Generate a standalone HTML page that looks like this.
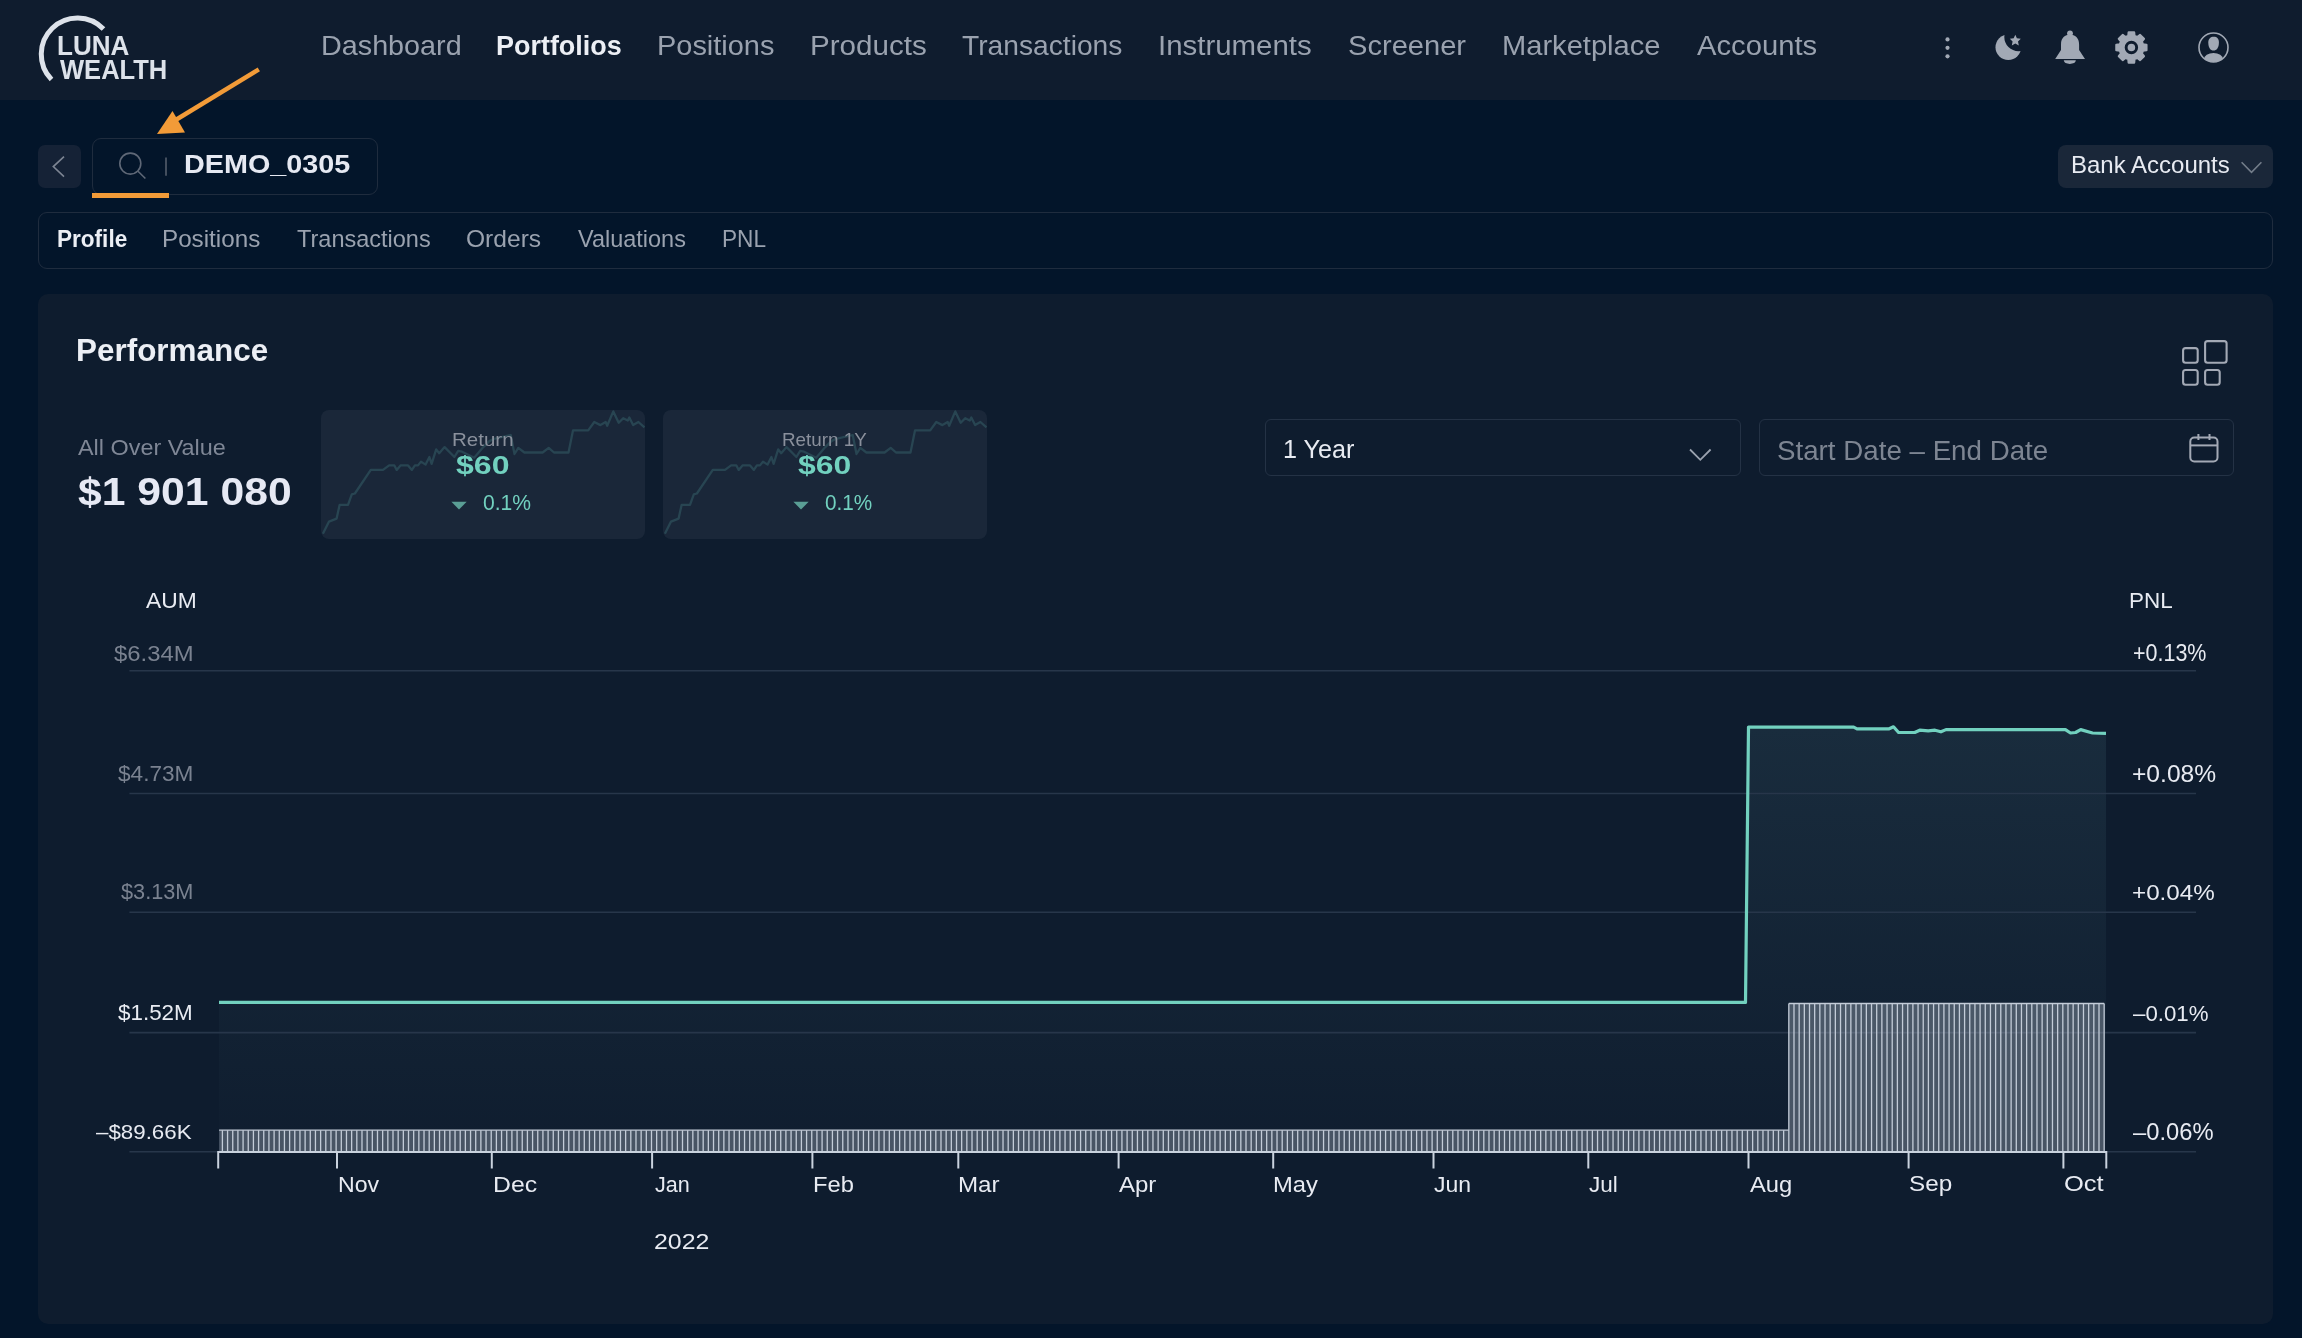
<!DOCTYPE html>
<html><head><meta charset="utf-8">
<style>
*{margin:0;padding:0;box-sizing:border-box}
html,body{width:2302px;height:1338px;overflow:hidden;background:#03152a;font-family:"Liberation Sans",sans-serif}
.a{position:absolute;white-space:nowrap;line-height:1}
.b{position:absolute}
svg{position:absolute;left:0;top:0;overflow:visible}
</style></head><body>
<div class="b" style="left:0;top:0;width:2302px;height:100px;background:#0f1c2e"></div>

<svg width="2302" height="100"><path d="M51.5,79.5 A31,31 0 1 1 103.5,29" fill="none" stroke="#dde2ea" stroke-width="5"/></svg>
<div class="a" style="left:56.6px;top:32.2px;font-size:27.24px;transform:scaleX(0.9575);transform-origin:0 0;font-weight:bold;color:#dde2ea;">LUNA</div>
<div class="a" style="left:60.2px;top:55.8px;font-size:27.39px;transform:scaleX(0.9328);transform-origin:0 0;font-weight:bold;color:#dde2ea;">WEALTH</div>
<div class="a" style="left:320.6px;top:32.1px;font-size:27.24px;transform:scaleX(1.0557);transform-origin:0 0;font-weight:normal;color:#9aa2af;">Dashboard</div>
<div class="a" style="left:656.7px;top:32.1px;font-size:27.24px;transform:scaleX(1.0622);transform-origin:0 0;font-weight:normal;color:#9aa2af;">Positions</div>
<div class="a" style="left:809.8px;top:32.1px;font-size:27.24px;transform:scaleX(1.086);transform-origin:0 0;font-weight:normal;color:#9aa2af;">Products</div>
<div class="a" style="left:962.4px;top:32.1px;font-size:27.24px;transform:scaleX(1.0355);transform-origin:0 0;font-weight:normal;color:#9aa2af;">Transactions</div>
<div class="a" style="left:1158.2px;top:32.1px;font-size:27.24px;transform:scaleX(1.0805);transform-origin:0 0;font-weight:normal;color:#9aa2af;">Instruments</div>
<div class="a" style="left:1347.9px;top:32.1px;font-size:27.24px;transform:scaleX(1.0682);transform-origin:0 0;font-weight:normal;color:#9aa2af;">Screener</div>
<div class="a" style="left:1501.9px;top:32.1px;font-size:27.24px;transform:scaleX(1.0682);transform-origin:0 0;font-weight:normal;color:#9aa2af;">Marketplace</div>
<div class="a" style="left:1697.0px;top:32.1px;font-size:27.24px;transform:scaleX(1.0725);transform-origin:0 0;font-weight:normal;color:#9aa2af;">Accounts</div>
<div class="a" style="left:496.1px;top:32.1px;font-size:27.24px;transform:scaleX(0.9892);transform-origin:0 0;font-weight:bold;color:#eceff5;">Portfolios</div>
<svg width="2302" height="100">
<circle cx="1947.5" cy="39.4" r="2.1" fill="#a2a9b5"/><circle cx="1947.5" cy="47.8" r="2.1" fill="#a2a9b5"/><circle cx="1947.5" cy="56.3" r="2.1" fill="#a2a9b5"/>
<mask id="mm"><rect x="1980" y="20" width="60" height="60" fill="#fff"/><circle cx="2018.5" cy="37" r="14.2" fill="#000"/></mask>
<circle cx="2008.3" cy="47.3" r="12.8" fill="#a2a9b5" mask="url(#mm)"/>
<path d="M2015.3,34.8 L2016.9,38.3 L2020.8,38.8 L2018,41.4 L2018.8,45.6 L2015.3,43.6 L2011.8,45.6 L2012.6,41.4 L2009.8,38.8 L2013.7,38.3Z" fill="#a2a9b5"/>
<circle cx="2070" cy="33.3" r="2.9" fill="#a2a9b5"/>
<path d="M2061,44.5 C2061,38 2065,34.6 2070,34.6 C2075,34.6 2079.1,38 2079.1,44.5 L2079.1,50 L2085,58.9 L2055.2,58.9 L2061,50 Z" fill="#a2a9b5"/>
<path d="M2063.8,60.3 L2075.8,60.3 C2075.8,62.6 2073,63.9 2069.8,63.9 C2066.6,63.9 2063.8,62.6 2063.8,60.3Z" fill="#a2a9b5"/>

<path d="M2128.32,35.90 L2128.66,32.45 L2134.14,32.45 L2134.48,35.90 L2137.42,37.12 L2140.11,34.92 L2143.98,38.79 L2141.78,41.48 L2143.00,44.42 L2146.45,44.76 L2146.45,50.24 L2143.00,50.58 L2141.78,53.52 L2143.98,56.21 L2140.11,60.08 L2137.42,57.88 L2134.48,59.10 L2134.14,62.55 L2128.66,62.55 L2128.32,59.10 L2125.38,57.88 L2122.69,60.08 L2118.82,56.21 L2121.02,53.52 L2119.80,50.58 L2116.35,50.24 L2116.35,44.76 L2119.80,44.42 L2121.02,41.48 L2118.82,38.79 L2122.69,34.92 L2125.38,37.12Z" fill="#a2a9b5" stroke="#a2a9b5" stroke-width="2.2" stroke-linejoin="round"/>
<circle cx="2131.4" cy="47.5" r="5.25" fill="none" stroke="#0f1c2e" stroke-width="2.9"/>
<circle cx="2213.5" cy="47.5" r="14.5" fill="none" stroke="#a2a9b5" stroke-width="1.6"/>
<clipPath id="uc"><circle cx="2213.5" cy="47.5" r="14.6"/></clipPath>
<path d="M2208.3,42.5 C2208.3,38.6 2210.6,36.8 2213.8,36.8 C2217,36.8 2218.9,38.6 2218.9,42.5 C2218.9,47.6 2216.6,50.6 2213.5,50.6 C2210.4,50.6 2208.3,47.6 2208.3,42.5Z" fill="#a2a9b5"/>
<ellipse cx="2213.5" cy="59" rx="9.5" ry="6" fill="#a2a9b5" clip-path="url(#uc)"/>
</svg>
<svg width="2302" height="300">
<line x1="258.8" y1="69.4" x2="174" y2="121" stroke="#f29b38" stroke-width="4.4"/>
<path d="M157,133.9 L172.5,111.1 L185,132.6Z" fill="#f29b38"/>
</svg>
<div class="b" style="left:38px;top:145px;width:43px;height:43px;border-radius:7px;background:#152236"></div>
<svg width="300" height="300"><path d="M64,156.6 L53.3,166.6 L64,176.6" fill="none" stroke="#7d8593" stroke-width="1.6"/></svg>
<div class="b" style="left:92px;top:138px;width:286px;height:57px;border-radius:9px;border:1px solid #1f2c3e"></div>
<svg width="400" height="300"><circle cx="130.3" cy="163.6" r="10.5" fill="none" stroke="#5f6877" stroke-width="1.6"/><line x1="138" y1="171.3" x2="145.4" y2="178.5" stroke="#5f6877" stroke-width="1.6"/><line x1="166" y1="157.5" x2="166" y2="175.7" stroke="#4b5564" stroke-width="1.8"/></svg>
<div class="a" style="left:184.4px;top:152.2px;font-size:25.49px;transform:scaleX(1.1285);transform-origin:0 0;font-weight:bold;color:#e6e9f2;">DEMO_0305</div>
<div class="b" style="left:92px;top:193px;width:77px;height:5px;background:#f29b38"></div>
<div class="b" style="left:2058px;top:145px;width:215px;height:43px;border-radius:8px;background:#1a2739"></div>
<div class="a" style="left:2071.3px;top:153.8px;font-size:23.02px;transform:scaleX(1.0428);transform-origin:0 0;font-weight:normal;color:#e8ebf2;">Bank Accounts</div>
<svg width="2302" height="300"><path d="M2241.6,162.3 L2251.5,172.3 L2261.4,162.3" fill="none" stroke="#737d8a" stroke-width="1.6"/></svg>
<div class="b" style="left:38px;top:212px;width:2235px;height:57px;border-radius:9px;border:1px solid #1f2c3e"></div>
<div class="a" style="left:56.7px;top:227.8px;font-size:23.02px;transform:scaleX(0.9801);transform-origin:0 0;font-weight:bold;color:#eceff5;">Profile</div>
<div class="a" style="left:162.2px;top:227.8px;font-size:23.02px;transform:scaleX(1.052);transform-origin:0 0;font-weight:normal;color:#9aa2af;">Positions</div>
<div class="a" style="left:296.8px;top:227.8px;font-size:23.02px;transform:scaleX(1.021);transform-origin:0 0;font-weight:normal;color:#9aa2af;">Transactions</div>
<div class="a" style="left:466.1px;top:227.8px;font-size:23.02px;transform:scaleX(1.0679);transform-origin:0 0;font-weight:normal;color:#9aa2af;">Orders</div>
<div class="a" style="left:578.4px;top:227.8px;font-size:23.02px;transform:scaleX(1.0199);transform-origin:0 0;font-weight:normal;color:#9aa2af;">Valuations</div>
<div class="a" style="left:721.5px;top:227.8px;font-size:23.02px;transform:scaleX(0.983);transform-origin:0 0;font-weight:normal;color:#9aa2af;">PNL</div>
<div class="b" style="left:38px;top:294px;width:2235px;height:1030px;border-radius:10px;background:#0e1c2e"></div>
<div class="a" style="left:76.3px;top:335.1px;font-size:31.32px;transform:scaleX(1.0036);transform-origin:0 0;font-weight:bold;color:#eceff5;">Performance</div>
<div class="a" style="left:78.0px;top:437.3px;font-size:21.7px;transform:scaleX(1.0787);transform-origin:0 0;font-weight:normal;color:#7f8796;">All Over Value</div>
<div class="a" style="left:77.6px;top:472.7px;font-size:38.33px;transform:scaleX(1.1137);transform-origin:0 0;font-weight:bold;color:#e6e9f4;">$1 901 080</div>
<div class="b" style="left:321.4px;top:410px;width:324px;height:128.5px;border-radius:8px;background:#1a2739;overflow:hidden"></div>
<svg width="2302" height="600"><clipPath id="sc0"><rect x="321.4" y="410" width="324" height="128.5" rx="8"/></clipPath><path d="M322.9,533.8 L329.0,521.6 L336.6,518.6 L339.6,504.9 L348.0,504.9 L351.8,494.3 L354.9,493.5 L370.8,469.9 L383.0,469.9 L389.1,465.4 L394.4,465.4 L396.7,469.9 L400.5,465.4 L408.1,465.4 L411.9,469.9 L414.9,465.4 L418.0,465.4 L421.0,461.6 L425.6,464.6 L429.4,457.0 L431.6,463.9 L436.2,449.4 L439.2,453.2 L444.6,447.1 L454.4,457.0 L458.2,450.9 L462.0,451.7 L474.2,457.8 L483.3,447.1 L489.4,441.1 L494.0,438.8 L510.7,435.0 L514.5,454.0 L518.3,447.9 L524.4,452.5 L542.6,452.5 L548.7,447.9 L554.0,452.5 L568.5,452.5 L573.0,430.4 L588.2,430.4 L594.3,422.0 L600.4,425.1 L605.7,422.0 L607.2,425.8 L613.3,411.4 L618.7,422.8 L623.2,418.2 L627.8,420.5 L629.3,417.5 L633.1,425.1 L638.4,422.0 L644.5,427.4" fill="none" stroke="#284552" stroke-width="2.3" stroke-linejoin="round" clip-path="url(#sc0)"/></svg>
<div class="a" style="left:452.2px;top:430.6px;font-size:18.21px;transform:scaleX(1.1272);transform-origin:0 0;font-weight:normal;color:#8a909c;">Return</div>
<div class="a" style="left:456.4px;top:451.9px;font-size:26.56px;transform:scaleX(1.2066);transform-origin:0 0;font-weight:bold;color:#72d1bf;">$60</div>
<svg width="2302" height="600"><path d="M451.4,501.8 L466.7,501.8 L459,509.5Z" fill="#5a9e95"/></svg>
<div class="a" style="left:482.7px;top:492.1px;font-size:22.54px;transform:scaleX(0.9357);transform-origin:0 0;font-weight:normal;color:#72d1bf;">0.1%</div>
<div class="b" style="left:663.4px;top:410px;width:324px;height:128.5px;border-radius:8px;background:#1a2739;overflow:hidden"></div>
<svg width="2302" height="600"><clipPath id="sc342"><rect x="663.4" y="410" width="324" height="128.5" rx="8"/></clipPath><path d="M664.9,533.8 L671.0,521.6 L678.6,518.6 L681.6,504.9 L690.0,504.9 L693.8,494.3 L696.9,493.5 L712.8,469.9 L725.0,469.9 L731.1,465.4 L736.4,465.4 L738.7,469.9 L742.5,465.4 L750.1,465.4 L753.9,469.9 L756.9,465.4 L760.0,465.4 L763.0,461.6 L767.6,464.6 L771.4,457.0 L773.6,463.9 L778.2,449.4 L781.2,453.2 L786.6,447.1 L796.4,457.0 L800.2,450.9 L804.0,451.7 L816.2,457.8 L825.3,447.1 L831.4,441.1 L836.0,438.8 L852.7,435.0 L856.5,454.0 L860.3,447.9 L866.4,452.5 L884.6,452.5 L890.7,447.9 L896.0,452.5 L910.5,452.5 L915.0,430.4 L930.2,430.4 L936.3,422.0 L942.4,425.1 L947.7,422.0 L949.2,425.8 L955.3,411.4 L960.7,422.8 L965.2,418.2 L969.8,420.5 L971.3,417.5 L975.1,425.1 L980.4,422.0 L986.5,427.4" fill="none" stroke="#284552" stroke-width="2.3" stroke-linejoin="round" clip-path="url(#sc342)"/></svg>
<div class="a" style="left:782.3px;top:430.6px;font-size:18.21px;transform:scaleX(1.0347);transform-origin:0 0;font-weight:normal;color:#8a909c;">Return 1Y</div>
<div class="a" style="left:798.4px;top:451.9px;font-size:26.56px;transform:scaleX(1.202);transform-origin:0 0;font-weight:bold;color:#72d1bf;">$60</div>
<svg width="2302" height="600"><path d="M793.4,501.8 L808.7,501.8 L801,509.5Z" fill="#5a9e95"/></svg>
<div class="a" style="left:824.8px;top:492.1px;font-size:22.54px;transform:scaleX(0.9195);transform-origin:0 0;font-weight:normal;color:#72d1bf;">0.1%</div>
<div class="b" style="left:1265px;top:419px;width:476px;height:57px;border-radius:6px;border:1px solid #243245"></div>
<div class="a" style="left:1282.8px;top:437.3px;font-size:25.93px;transform:scaleX(0.9712);transform-origin:0 0;font-weight:normal;color:#e8ebf2;">1 Year</div>
<svg width="2302" height="600"><path d="M1690,449.5 L1700.3,459.8 L1710.6,449.5" fill="none" stroke="#9aa2af" stroke-width="1.8"/></svg>
<div class="b" style="left:1759px;top:419px;width:475px;height:57px;border-radius:6px;border:1px solid #243245"></div>
<div class="a" style="left:1777.2px;top:436.6px;font-size:27.09px;transform:scaleX(1.0238);transform-origin:0 0;font-weight:normal;color:#7d8592;">Start Date – End Date</div>
<svg width="2302" height="600">
<rect x="2190.3" y="437.5" width="27.2" height="24" rx="4" fill="none" stroke="#a3a9b5" stroke-width="2"/>
<line x1="2190.3" y1="445.4" x2="2217.5" y2="445.4" stroke="#a3a9b5" stroke-width="2"/>
<line x1="2198.4" y1="434" x2="2198.4" y2="440" stroke="#a3a9b5" stroke-width="2"/>
<line x1="2209.5" y1="434" x2="2209.5" y2="440" stroke="#a3a9b5" stroke-width="2"/>
<rect x="2183.1" y="348.1" width="14.6" height="14.7" rx="2.5" fill="none" stroke="#a3a9b5" stroke-width="2.1"/>
<rect x="2205.1" y="341.1" width="21.5" height="21.7" rx="2.5" fill="none" stroke="#a3a9b5" stroke-width="2.1"/>
<rect x="2183.1" y="370" width="14.6" height="14.8" rx="2.5" fill="none" stroke="#a3a9b5" stroke-width="2.1"/>
<rect x="2205.1" y="370" width="14.6" height="14.8" rx="2.5" fill="none" stroke="#a3a9b5" stroke-width="2.1"/>
</svg>
<svg width="2302" height="1338">
<linearGradient id="fg" gradientUnits="userSpaceOnUse" x1="0" y1="727" x2="0" y2="1151"><stop offset="0" stop-color="#192c3d"/><stop offset="1" stop-color="#0f1d2f"/></linearGradient>
<path d="M219,1002.4 L1745.5,1002.4 L1748.5,727.1 L1853.7,727.1 L1857,728.8 L1889.2,728.8 L1893.5,726.8 L1898.6,732.5 L1914.7,732.5 L1919.7,730.2 L1928.2,730.8 L1935,730.2 L1940.9,731.8 L1946,729.6 L2065.4,729.6 L2070.5,733 L2075.6,732.5 L2080.7,729.6 L2092.5,733 L2106,733.4 L2106,1151.8 L219,1151.8Z" fill="url(#fg)"/>
<line x1="129.4" y1="670.8" x2="2196" y2="670.8" stroke="#27364a" stroke-width="1.6"/>
<line x1="129.4" y1="793.5" x2="2196" y2="793.5" stroke="#27364a" stroke-width="1.6"/>
<line x1="129.4" y1="912.2" x2="2196" y2="912.2" stroke="#27364a" stroke-width="1.6"/>
<line x1="129.4" y1="1032.6" x2="2196" y2="1032.6" stroke="#27364a" stroke-width="1.6"/>
<line x1="129.4" y1="1151.8" x2="218" y2="1151.8" stroke="#27364a" stroke-width="1.6"/>
<line x1="2106" y1="1151.8" x2="2196" y2="1151.8" stroke="#27364a" stroke-width="1.6"/>
<path d="M219.10,1130.2H222.40V1151.8H219.10ZM222.40,1130.2H227.57V1151.8H222.40ZM227.57,1130.2H232.74V1151.8H227.57ZM232.74,1130.2H237.91V1151.8H232.74ZM237.91,1130.2H243.08V1151.8H237.91ZM243.08,1130.2H248.25V1151.8H243.08ZM248.25,1130.2H253.42V1151.8H248.25ZM253.42,1130.2H258.59V1151.8H253.42ZM258.59,1130.2H263.76V1151.8H258.59ZM263.76,1130.2H268.93V1151.8H263.76ZM268.93,1130.2H274.10V1151.8H268.93ZM274.10,1130.2H279.27V1151.8H274.10ZM279.27,1130.2H284.44V1151.8H279.27ZM284.44,1130.2H289.61V1151.8H284.44ZM289.61,1130.2H294.78V1151.8H289.61ZM294.78,1130.2H299.95V1151.8H294.78ZM299.95,1130.2H305.12V1151.8H299.95ZM305.12,1130.2H310.28V1151.8H305.12ZM310.28,1130.2H315.45V1151.8H310.28ZM315.45,1130.2H320.62V1151.8H315.45ZM320.62,1130.2H325.79V1151.8H320.62ZM325.79,1130.2H330.96V1151.8H325.79ZM330.96,1130.2H336.13V1151.8H330.96ZM336.13,1130.2H341.30V1151.8H336.13ZM341.30,1130.2H346.47V1151.8H341.30ZM346.47,1130.2H351.64V1151.8H346.47ZM351.64,1130.2H356.81V1151.8H351.64ZM356.81,1130.2H361.98V1151.8H356.81ZM361.98,1130.2H367.15V1151.8H361.98ZM367.15,1130.2H372.32V1151.8H367.15ZM372.32,1130.2H377.49V1151.8H372.32ZM377.49,1130.2H382.66V1151.8H377.49ZM382.66,1130.2H387.83V1151.8H382.66ZM387.83,1130.2H393.00V1151.8H387.83ZM393.00,1130.2H398.17V1151.8H393.00ZM398.17,1130.2H403.34V1151.8H398.17ZM403.34,1130.2H408.51V1151.8H403.34ZM408.51,1130.2H413.68V1151.8H408.51ZM413.68,1130.2H418.85V1151.8H413.68ZM418.85,1130.2H424.02V1151.8H418.85ZM424.02,1130.2H429.19V1151.8H424.02ZM429.19,1130.2H434.36V1151.8H429.19ZM434.36,1130.2H439.53V1151.8H434.36ZM439.53,1130.2H444.70V1151.8H439.53ZM444.70,1130.2H449.87V1151.8H444.70ZM449.87,1130.2H455.04V1151.8H449.87ZM455.04,1130.2H460.21V1151.8H455.04ZM460.21,1130.2H465.38V1151.8H460.21ZM465.38,1130.2H470.55V1151.8H465.38ZM470.55,1130.2H475.72V1151.8H470.55ZM475.72,1130.2H480.88V1151.8H475.72ZM480.88,1130.2H486.05V1151.8H480.88ZM486.05,1130.2H491.22V1151.8H486.05ZM491.22,1130.2H496.39V1151.8H491.22ZM496.39,1130.2H501.56V1151.8H496.39ZM501.56,1130.2H506.73V1151.8H501.56ZM506.73,1130.2H511.90V1151.8H506.73ZM511.90,1130.2H517.07V1151.8H511.90ZM517.07,1130.2H522.24V1151.8H517.07ZM522.24,1130.2H527.41V1151.8H522.24ZM527.41,1130.2H532.58V1151.8H527.41ZM532.58,1130.2H537.75V1151.8H532.58ZM537.75,1130.2H542.92V1151.8H537.75ZM542.92,1130.2H548.09V1151.8H542.92ZM548.09,1130.2H553.26V1151.8H548.09ZM553.26,1130.2H558.43V1151.8H553.26ZM558.43,1130.2H563.60V1151.8H558.43ZM563.60,1130.2H568.77V1151.8H563.60ZM568.77,1130.2H573.94V1151.8H568.77ZM573.94,1130.2H579.11V1151.8H573.94ZM579.11,1130.2H584.28V1151.8H579.11ZM584.28,1130.2H589.45V1151.8H584.28ZM589.45,1130.2H594.62V1151.8H589.45ZM594.62,1130.2H599.79V1151.8H594.62ZM599.79,1130.2H604.96V1151.8H599.79ZM604.96,1130.2H610.13V1151.8H604.96ZM610.13,1130.2H615.30V1151.8H610.13ZM615.30,1130.2H620.47V1151.8H615.30ZM620.47,1130.2H625.64V1151.8H620.47ZM625.64,1130.2H630.81V1151.8H625.64ZM630.81,1130.2H635.98V1151.8H630.81ZM635.98,1130.2H641.15V1151.8H635.98ZM641.15,1130.2H646.32V1151.8H641.15ZM646.32,1130.2H651.49V1151.8H646.32ZM651.49,1130.2H656.65V1151.8H651.49ZM656.65,1130.2H661.82V1151.8H656.65ZM661.82,1130.2H666.99V1151.8H661.82ZM666.99,1130.2H672.16V1151.8H666.99ZM672.16,1130.2H677.33V1151.8H672.16ZM677.33,1130.2H682.50V1151.8H677.33ZM682.50,1130.2H687.67V1151.8H682.50ZM687.67,1130.2H692.84V1151.8H687.67ZM692.84,1130.2H698.01V1151.8H692.84ZM698.01,1130.2H703.18V1151.8H698.01ZM703.18,1130.2H708.35V1151.8H703.18ZM708.35,1130.2H713.52V1151.8H708.35ZM713.52,1130.2H718.69V1151.8H713.52ZM718.69,1130.2H723.86V1151.8H718.69ZM723.86,1130.2H729.03V1151.8H723.86ZM729.03,1130.2H734.20V1151.8H729.03ZM734.20,1130.2H739.37V1151.8H734.20ZM739.37,1130.2H744.54V1151.8H739.37ZM744.54,1130.2H749.71V1151.8H744.54ZM749.71,1130.2H754.88V1151.8H749.71ZM754.88,1130.2H760.05V1151.8H754.88ZM760.05,1130.2H765.22V1151.8H760.05ZM765.22,1130.2H770.39V1151.8H765.22ZM770.39,1130.2H775.56V1151.8H770.39ZM775.56,1130.2H780.73V1151.8H775.56ZM780.73,1130.2H785.90V1151.8H780.73ZM785.90,1130.2H791.07V1151.8H785.90ZM791.07,1130.2H796.24V1151.8H791.07ZM796.24,1130.2H801.41V1151.8H796.24ZM801.41,1130.2H806.58V1151.8H801.41ZM806.58,1130.2H811.75V1151.8H806.58ZM811.75,1130.2H816.92V1151.8H811.75ZM816.92,1130.2H822.09V1151.8H816.92ZM822.09,1130.2H827.25V1151.8H822.09ZM827.25,1130.2H832.42V1151.8H827.25ZM832.42,1130.2H837.59V1151.8H832.42ZM837.59,1130.2H842.76V1151.8H837.59ZM842.76,1130.2H847.93V1151.8H842.76ZM847.93,1130.2H853.10V1151.8H847.93ZM853.10,1130.2H858.27V1151.8H853.10ZM858.27,1130.2H863.44V1151.8H858.27ZM863.44,1130.2H868.61V1151.8H863.44ZM868.61,1130.2H873.78V1151.8H868.61ZM873.78,1130.2H878.95V1151.8H873.78ZM878.95,1130.2H884.12V1151.8H878.95ZM884.12,1130.2H889.29V1151.8H884.12ZM889.29,1130.2H894.46V1151.8H889.29ZM894.46,1130.2H899.63V1151.8H894.46ZM899.63,1130.2H904.80V1151.8H899.63ZM904.80,1130.2H909.97V1151.8H904.80ZM909.97,1130.2H915.14V1151.8H909.97ZM915.14,1130.2H920.31V1151.8H915.14ZM920.31,1130.2H925.48V1151.8H920.31ZM925.48,1130.2H930.65V1151.8H925.48ZM930.65,1130.2H935.82V1151.8H930.65ZM935.82,1130.2H940.99V1151.8H935.82ZM940.99,1130.2H946.16V1151.8H940.99ZM946.16,1130.2H951.33V1151.8H946.16ZM951.33,1130.2H956.50V1151.8H951.33ZM956.50,1130.2H961.67V1151.8H956.50ZM961.67,1130.2H966.84V1151.8H961.67ZM966.84,1130.2H972.01V1151.8H966.84ZM972.01,1130.2H977.18V1151.8H972.01ZM977.18,1130.2H982.35V1151.8H977.18ZM982.35,1130.2H987.52V1151.8H982.35ZM987.52,1130.2H992.69V1151.8H987.52ZM992.69,1130.2H997.85V1151.8H992.69ZM997.85,1130.2H1003.02V1151.8H997.85ZM1003.02,1130.2H1008.19V1151.8H1003.02ZM1008.19,1130.2H1013.36V1151.8H1008.19ZM1013.36,1130.2H1018.53V1151.8H1013.36ZM1018.53,1130.2H1023.70V1151.8H1018.53ZM1023.70,1130.2H1028.87V1151.8H1023.70ZM1028.87,1130.2H1034.04V1151.8H1028.87ZM1034.04,1130.2H1039.21V1151.8H1034.04ZM1039.21,1130.2H1044.38V1151.8H1039.21ZM1044.38,1130.2H1049.55V1151.8H1044.38ZM1049.55,1130.2H1054.72V1151.8H1049.55ZM1054.72,1130.2H1059.89V1151.8H1054.72ZM1059.89,1130.2H1065.06V1151.8H1059.89ZM1065.06,1130.2H1070.23V1151.8H1065.06ZM1070.23,1130.2H1075.40V1151.8H1070.23ZM1075.40,1130.2H1080.57V1151.8H1075.40ZM1080.57,1130.2H1085.74V1151.8H1080.57ZM1085.74,1130.2H1090.91V1151.8H1085.74ZM1090.91,1130.2H1096.08V1151.8H1090.91ZM1096.08,1130.2H1101.25V1151.8H1096.08ZM1101.25,1130.2H1106.42V1151.8H1101.25ZM1106.42,1130.2H1111.59V1151.8H1106.42ZM1111.59,1130.2H1116.76V1151.8H1111.59ZM1116.76,1130.2H1121.93V1151.8H1116.76ZM1121.93,1130.2H1127.10V1151.8H1121.93ZM1127.10,1130.2H1132.27V1151.8H1127.10ZM1132.27,1130.2H1137.44V1151.8H1132.27ZM1137.44,1130.2H1142.61V1151.8H1137.44ZM1142.61,1130.2H1147.78V1151.8H1142.61ZM1147.78,1130.2H1152.95V1151.8H1147.78ZM1152.95,1130.2H1158.12V1151.8H1152.95ZM1158.12,1130.2H1163.29V1151.8H1158.12ZM1163.29,1130.2H1168.46V1151.8H1163.29ZM1168.46,1130.2H1173.62V1151.8H1168.46ZM1173.62,1130.2H1178.79V1151.8H1173.62ZM1178.79,1130.2H1183.96V1151.8H1178.79ZM1183.96,1130.2H1189.13V1151.8H1183.96ZM1189.13,1130.2H1194.30V1151.8H1189.13ZM1194.30,1130.2H1199.47V1151.8H1194.30ZM1199.47,1130.2H1204.64V1151.8H1199.47ZM1204.64,1130.2H1209.81V1151.8H1204.64ZM1209.81,1130.2H1214.98V1151.8H1209.81ZM1214.98,1130.2H1220.15V1151.8H1214.98ZM1220.15,1130.2H1225.32V1151.8H1220.15ZM1225.32,1130.2H1230.49V1151.8H1225.32ZM1230.49,1130.2H1235.66V1151.8H1230.49ZM1235.66,1130.2H1240.83V1151.8H1235.66ZM1240.83,1130.2H1246.00V1151.8H1240.83ZM1246.00,1130.2H1251.17V1151.8H1246.00ZM1251.17,1130.2H1256.34V1151.8H1251.17ZM1256.34,1130.2H1261.51V1151.8H1256.34ZM1261.51,1130.2H1266.68V1151.8H1261.51ZM1266.68,1130.2H1271.85V1151.8H1266.68ZM1271.85,1130.2H1277.02V1151.8H1271.85ZM1277.02,1130.2H1282.19V1151.8H1277.02ZM1282.19,1130.2H1287.36V1151.8H1282.19ZM1287.36,1130.2H1292.53V1151.8H1287.36ZM1292.53,1130.2H1297.70V1151.8H1292.53ZM1297.70,1130.2H1302.87V1151.8H1297.70ZM1302.87,1130.2H1308.04V1151.8H1302.87ZM1308.04,1130.2H1313.21V1151.8H1308.04ZM1313.21,1130.2H1318.38V1151.8H1313.21ZM1318.38,1130.2H1323.55V1151.8H1318.38ZM1323.55,1130.2H1328.72V1151.8H1323.55ZM1328.72,1130.2H1333.89V1151.8H1328.72ZM1333.89,1130.2H1339.06V1151.8H1333.89ZM1339.06,1130.2H1344.22V1151.8H1339.06ZM1344.22,1130.2H1349.39V1151.8H1344.22ZM1349.39,1130.2H1354.56V1151.8H1349.39ZM1354.56,1130.2H1359.73V1151.8H1354.56ZM1359.73,1130.2H1364.90V1151.8H1359.73ZM1364.90,1130.2H1370.07V1151.8H1364.90ZM1370.07,1130.2H1375.24V1151.8H1370.07ZM1375.24,1130.2H1380.41V1151.8H1375.24ZM1380.41,1130.2H1385.58V1151.8H1380.41ZM1385.58,1130.2H1390.75V1151.8H1385.58ZM1390.75,1130.2H1395.92V1151.8H1390.75ZM1395.92,1130.2H1401.09V1151.8H1395.92ZM1401.09,1130.2H1406.26V1151.8H1401.09ZM1406.26,1130.2H1411.43V1151.8H1406.26ZM1411.43,1130.2H1416.60V1151.8H1411.43ZM1416.60,1130.2H1421.77V1151.8H1416.60ZM1421.77,1130.2H1426.94V1151.8H1421.77ZM1426.94,1130.2H1432.11V1151.8H1426.94ZM1432.11,1130.2H1437.28V1151.8H1432.11ZM1437.28,1130.2H1442.45V1151.8H1437.28ZM1442.45,1130.2H1447.62V1151.8H1442.45ZM1447.62,1130.2H1452.79V1151.8H1447.62ZM1452.79,1130.2H1457.96V1151.8H1452.79ZM1457.96,1130.2H1463.13V1151.8H1457.96ZM1463.13,1130.2H1468.30V1151.8H1463.13ZM1468.30,1130.2H1473.47V1151.8H1468.30ZM1473.47,1130.2H1478.64V1151.8H1473.47ZM1478.64,1130.2H1483.81V1151.8H1478.64ZM1483.81,1130.2H1488.98V1151.8H1483.81ZM1488.98,1130.2H1494.15V1151.8H1488.98ZM1494.15,1130.2H1499.32V1151.8H1494.15ZM1499.32,1130.2H1504.49V1151.8H1499.32ZM1504.49,1130.2H1509.66V1151.8H1504.49ZM1509.66,1130.2H1514.83V1151.8H1509.66ZM1514.83,1130.2H1519.99V1151.8H1514.83ZM1519.99,1130.2H1525.16V1151.8H1519.99ZM1525.16,1130.2H1530.33V1151.8H1525.16ZM1530.33,1130.2H1535.50V1151.8H1530.33ZM1535.50,1130.2H1540.67V1151.8H1535.50ZM1540.67,1130.2H1545.84V1151.8H1540.67ZM1545.84,1130.2H1551.01V1151.8H1545.84ZM1551.01,1130.2H1556.18V1151.8H1551.01ZM1556.18,1130.2H1561.35V1151.8H1556.18ZM1561.35,1130.2H1566.52V1151.8H1561.35ZM1566.52,1130.2H1571.69V1151.8H1566.52ZM1571.69,1130.2H1576.86V1151.8H1571.69ZM1576.86,1130.2H1582.03V1151.8H1576.86ZM1582.03,1130.2H1587.20V1151.8H1582.03ZM1587.20,1130.2H1592.37V1151.8H1587.20ZM1592.37,1130.2H1597.54V1151.8H1592.37ZM1597.54,1130.2H1602.71V1151.8H1597.54ZM1602.71,1130.2H1607.88V1151.8H1602.71ZM1607.88,1130.2H1613.05V1151.8H1607.88ZM1613.05,1130.2H1618.22V1151.8H1613.05ZM1618.22,1130.2H1623.39V1151.8H1618.22ZM1623.39,1130.2H1628.56V1151.8H1623.39ZM1628.56,1130.2H1633.73V1151.8H1628.56ZM1633.73,1130.2H1638.90V1151.8H1633.73ZM1638.90,1130.2H1644.07V1151.8H1638.90ZM1644.07,1130.2H1649.24V1151.8H1644.07ZM1649.24,1130.2H1654.41V1151.8H1649.24ZM1654.41,1130.2H1659.58V1151.8H1654.41ZM1659.58,1130.2H1664.75V1151.8H1659.58ZM1664.75,1130.2H1669.92V1151.8H1664.75ZM1669.92,1130.2H1675.09V1151.8H1669.92ZM1675.09,1130.2H1680.26V1151.8H1675.09ZM1680.26,1130.2H1685.43V1151.8H1680.26ZM1685.43,1130.2H1690.59V1151.8H1685.43ZM1690.59,1130.2H1695.76V1151.8H1690.59ZM1695.76,1130.2H1700.93V1151.8H1695.76ZM1700.93,1130.2H1706.10V1151.8H1700.93ZM1706.10,1130.2H1711.27V1151.8H1706.10ZM1711.27,1130.2H1716.44V1151.8H1711.27ZM1716.44,1130.2H1721.61V1151.8H1716.44ZM1721.61,1130.2H1726.78V1151.8H1721.61ZM1726.78,1130.2H1731.95V1151.8H1726.78ZM1731.95,1130.2H1737.12V1151.8H1731.95ZM1737.12,1130.2H1742.29V1151.8H1737.12ZM1742.29,1130.2H1747.46V1151.8H1742.29ZM1747.46,1130.2H1752.63V1151.8H1747.46ZM1752.63,1130.2H1757.80V1151.8H1752.63ZM1757.80,1130.2H1762.97V1151.8H1757.80ZM1762.97,1130.2H1768.14V1151.8H1762.97ZM1768.14,1130.2H1773.31V1151.8H1768.14ZM1773.31,1130.2H1778.48V1151.8H1773.31ZM1778.48,1130.2H1783.65V1151.8H1778.48ZM1783.65,1130.2H1788.82V1151.8H1783.65ZM1788.82,1003.5H1793.99V1151.8H1788.82ZM1793.99,1003.5H1799.16V1151.8H1793.99ZM1799.16,1003.5H1804.33V1151.8H1799.16ZM1804.33,1003.5H1809.50V1151.8H1804.33ZM1809.50,1003.5H1814.67V1151.8H1809.50ZM1814.67,1003.5H1819.84V1151.8H1814.67ZM1819.84,1003.5H1825.01V1151.8H1819.84ZM1825.01,1003.5H1830.18V1151.8H1825.01ZM1830.18,1003.5H1835.35V1151.8H1830.18ZM1835.35,1003.5H1840.52V1151.8H1835.35ZM1840.52,1003.5H1845.69V1151.8H1840.52ZM1845.69,1003.5H1850.86V1151.8H1845.69ZM1850.86,1003.5H1856.03V1151.8H1850.86ZM1856.03,1003.5H1861.19V1151.8H1856.03ZM1861.19,1003.5H1866.36V1151.8H1861.19ZM1866.36,1003.5H1871.53V1151.8H1866.36ZM1871.53,1003.5H1876.70V1151.8H1871.53ZM1876.70,1003.5H1881.87V1151.8H1876.70ZM1881.87,1003.5H1887.04V1151.8H1881.87ZM1887.04,1003.5H1892.21V1151.8H1887.04ZM1892.21,1003.5H1897.38V1151.8H1892.21ZM1897.38,1003.5H1902.55V1151.8H1897.38ZM1902.55,1003.5H1907.72V1151.8H1902.55ZM1907.72,1003.5H1912.89V1151.8H1907.72ZM1912.89,1003.5H1918.06V1151.8H1912.89ZM1918.06,1003.5H1923.23V1151.8H1918.06ZM1923.23,1003.5H1928.40V1151.8H1923.23ZM1928.40,1003.5H1933.57V1151.8H1928.40ZM1933.57,1003.5H1938.74V1151.8H1933.57ZM1938.74,1003.5H1943.91V1151.8H1938.74ZM1943.91,1003.5H1949.08V1151.8H1943.91ZM1949.08,1003.5H1954.25V1151.8H1949.08ZM1954.25,1003.5H1959.42V1151.8H1954.25ZM1959.42,1003.5H1964.59V1151.8H1959.42ZM1964.59,1003.5H1969.76V1151.8H1964.59ZM1969.76,1003.5H1974.93V1151.8H1969.76ZM1974.93,1003.5H1980.10V1151.8H1974.93ZM1980.10,1003.5H1985.27V1151.8H1980.10ZM1985.27,1003.5H1990.44V1151.8H1985.27ZM1990.44,1003.5H1995.61V1151.8H1990.44ZM1995.61,1003.5H2000.78V1151.8H1995.61ZM2000.78,1003.5H2005.95V1151.8H2000.78ZM2005.95,1003.5H2011.12V1151.8H2005.95ZM2011.12,1003.5H2016.29V1151.8H2011.12ZM2016.29,1003.5H2021.46V1151.8H2016.29ZM2021.46,1003.5H2026.63V1151.8H2021.46ZM2026.63,1003.5H2031.80V1151.8H2026.63ZM2031.80,1003.5H2036.96V1151.8H2031.80ZM2036.96,1003.5H2042.13V1151.8H2036.96ZM2042.13,1003.5H2047.30V1151.8H2042.13ZM2047.30,1003.5H2052.47V1151.8H2047.30ZM2052.47,1003.5H2057.64V1151.8H2052.47ZM2057.64,1003.5H2062.81V1151.8H2057.64ZM2062.81,1003.5H2067.98V1151.8H2062.81ZM2067.98,1003.5H2073.15V1151.8H2067.98ZM2073.15,1003.5H2078.32V1151.8H2073.15ZM2078.32,1003.5H2083.49V1151.8H2078.32ZM2083.49,1003.5H2088.66V1151.8H2083.49ZM2088.66,1003.5H2093.83V1151.8H2088.66ZM2093.83,1003.5H2099.00V1151.8H2093.83ZM2099.00,1003.5H2104.17V1151.8H2099.00Z" fill="#c0c9d6" fill-opacity="0.32"/>
<path d="M222.40,1130.2V1151.8M227.57,1130.2V1151.8M232.74,1130.2V1151.8M237.91,1130.2V1151.8M243.08,1130.2V1151.8M248.25,1130.2V1151.8M253.42,1130.2V1151.8M258.59,1130.2V1151.8M263.76,1130.2V1151.8M268.93,1130.2V1151.8M274.10,1130.2V1151.8M279.27,1130.2V1151.8M284.44,1130.2V1151.8M289.61,1130.2V1151.8M294.78,1130.2V1151.8M299.95,1130.2V1151.8M305.12,1130.2V1151.8M310.28,1130.2V1151.8M315.45,1130.2V1151.8M320.62,1130.2V1151.8M325.79,1130.2V1151.8M330.96,1130.2V1151.8M336.13,1130.2V1151.8M341.30,1130.2V1151.8M346.47,1130.2V1151.8M351.64,1130.2V1151.8M356.81,1130.2V1151.8M361.98,1130.2V1151.8M367.15,1130.2V1151.8M372.32,1130.2V1151.8M377.49,1130.2V1151.8M382.66,1130.2V1151.8M387.83,1130.2V1151.8M393.00,1130.2V1151.8M398.17,1130.2V1151.8M403.34,1130.2V1151.8M408.51,1130.2V1151.8M413.68,1130.2V1151.8M418.85,1130.2V1151.8M424.02,1130.2V1151.8M429.19,1130.2V1151.8M434.36,1130.2V1151.8M439.53,1130.2V1151.8M444.70,1130.2V1151.8M449.87,1130.2V1151.8M455.04,1130.2V1151.8M460.21,1130.2V1151.8M465.38,1130.2V1151.8M470.55,1130.2V1151.8M475.72,1130.2V1151.8M480.88,1130.2V1151.8M486.05,1130.2V1151.8M491.22,1130.2V1151.8M496.39,1130.2V1151.8M501.56,1130.2V1151.8M506.73,1130.2V1151.8M511.90,1130.2V1151.8M517.07,1130.2V1151.8M522.24,1130.2V1151.8M527.41,1130.2V1151.8M532.58,1130.2V1151.8M537.75,1130.2V1151.8M542.92,1130.2V1151.8M548.09,1130.2V1151.8M553.26,1130.2V1151.8M558.43,1130.2V1151.8M563.60,1130.2V1151.8M568.77,1130.2V1151.8M573.94,1130.2V1151.8M579.11,1130.2V1151.8M584.28,1130.2V1151.8M589.45,1130.2V1151.8M594.62,1130.2V1151.8M599.79,1130.2V1151.8M604.96,1130.2V1151.8M610.13,1130.2V1151.8M615.30,1130.2V1151.8M620.47,1130.2V1151.8M625.64,1130.2V1151.8M630.81,1130.2V1151.8M635.98,1130.2V1151.8M641.15,1130.2V1151.8M646.32,1130.2V1151.8M651.49,1130.2V1151.8M656.65,1130.2V1151.8M661.82,1130.2V1151.8M666.99,1130.2V1151.8M672.16,1130.2V1151.8M677.33,1130.2V1151.8M682.50,1130.2V1151.8M687.67,1130.2V1151.8M692.84,1130.2V1151.8M698.01,1130.2V1151.8M703.18,1130.2V1151.8M708.35,1130.2V1151.8M713.52,1130.2V1151.8M718.69,1130.2V1151.8M723.86,1130.2V1151.8M729.03,1130.2V1151.8M734.20,1130.2V1151.8M739.37,1130.2V1151.8M744.54,1130.2V1151.8M749.71,1130.2V1151.8M754.88,1130.2V1151.8M760.05,1130.2V1151.8M765.22,1130.2V1151.8M770.39,1130.2V1151.8M775.56,1130.2V1151.8M780.73,1130.2V1151.8M785.90,1130.2V1151.8M791.07,1130.2V1151.8M796.24,1130.2V1151.8M801.41,1130.2V1151.8M806.58,1130.2V1151.8M811.75,1130.2V1151.8M816.92,1130.2V1151.8M822.09,1130.2V1151.8M827.25,1130.2V1151.8M832.42,1130.2V1151.8M837.59,1130.2V1151.8M842.76,1130.2V1151.8M847.93,1130.2V1151.8M853.10,1130.2V1151.8M858.27,1130.2V1151.8M863.44,1130.2V1151.8M868.61,1130.2V1151.8M873.78,1130.2V1151.8M878.95,1130.2V1151.8M884.12,1130.2V1151.8M889.29,1130.2V1151.8M894.46,1130.2V1151.8M899.63,1130.2V1151.8M904.80,1130.2V1151.8M909.97,1130.2V1151.8M915.14,1130.2V1151.8M920.31,1130.2V1151.8M925.48,1130.2V1151.8M930.65,1130.2V1151.8M935.82,1130.2V1151.8M940.99,1130.2V1151.8M946.16,1130.2V1151.8M951.33,1130.2V1151.8M956.50,1130.2V1151.8M961.67,1130.2V1151.8M966.84,1130.2V1151.8M972.01,1130.2V1151.8M977.18,1130.2V1151.8M982.35,1130.2V1151.8M987.52,1130.2V1151.8M992.69,1130.2V1151.8M997.85,1130.2V1151.8M1003.02,1130.2V1151.8M1008.19,1130.2V1151.8M1013.36,1130.2V1151.8M1018.53,1130.2V1151.8M1023.70,1130.2V1151.8M1028.87,1130.2V1151.8M1034.04,1130.2V1151.8M1039.21,1130.2V1151.8M1044.38,1130.2V1151.8M1049.55,1130.2V1151.8M1054.72,1130.2V1151.8M1059.89,1130.2V1151.8M1065.06,1130.2V1151.8M1070.23,1130.2V1151.8M1075.40,1130.2V1151.8M1080.57,1130.2V1151.8M1085.74,1130.2V1151.8M1090.91,1130.2V1151.8M1096.08,1130.2V1151.8M1101.25,1130.2V1151.8M1106.42,1130.2V1151.8M1111.59,1130.2V1151.8M1116.76,1130.2V1151.8M1121.93,1130.2V1151.8M1127.10,1130.2V1151.8M1132.27,1130.2V1151.8M1137.44,1130.2V1151.8M1142.61,1130.2V1151.8M1147.78,1130.2V1151.8M1152.95,1130.2V1151.8M1158.12,1130.2V1151.8M1163.29,1130.2V1151.8M1168.46,1130.2V1151.8M1173.62,1130.2V1151.8M1178.79,1130.2V1151.8M1183.96,1130.2V1151.8M1189.13,1130.2V1151.8M1194.30,1130.2V1151.8M1199.47,1130.2V1151.8M1204.64,1130.2V1151.8M1209.81,1130.2V1151.8M1214.98,1130.2V1151.8M1220.15,1130.2V1151.8M1225.32,1130.2V1151.8M1230.49,1130.2V1151.8M1235.66,1130.2V1151.8M1240.83,1130.2V1151.8M1246.00,1130.2V1151.8M1251.17,1130.2V1151.8M1256.34,1130.2V1151.8M1261.51,1130.2V1151.8M1266.68,1130.2V1151.8M1271.85,1130.2V1151.8M1277.02,1130.2V1151.8M1282.19,1130.2V1151.8M1287.36,1130.2V1151.8M1292.53,1130.2V1151.8M1297.70,1130.2V1151.8M1302.87,1130.2V1151.8M1308.04,1130.2V1151.8M1313.21,1130.2V1151.8M1318.38,1130.2V1151.8M1323.55,1130.2V1151.8M1328.72,1130.2V1151.8M1333.89,1130.2V1151.8M1339.06,1130.2V1151.8M1344.22,1130.2V1151.8M1349.39,1130.2V1151.8M1354.56,1130.2V1151.8M1359.73,1130.2V1151.8M1364.90,1130.2V1151.8M1370.07,1130.2V1151.8M1375.24,1130.2V1151.8M1380.41,1130.2V1151.8M1385.58,1130.2V1151.8M1390.75,1130.2V1151.8M1395.92,1130.2V1151.8M1401.09,1130.2V1151.8M1406.26,1130.2V1151.8M1411.43,1130.2V1151.8M1416.60,1130.2V1151.8M1421.77,1130.2V1151.8M1426.94,1130.2V1151.8M1432.11,1130.2V1151.8M1437.28,1130.2V1151.8M1442.45,1130.2V1151.8M1447.62,1130.2V1151.8M1452.79,1130.2V1151.8M1457.96,1130.2V1151.8M1463.13,1130.2V1151.8M1468.30,1130.2V1151.8M1473.47,1130.2V1151.8M1478.64,1130.2V1151.8M1483.81,1130.2V1151.8M1488.98,1130.2V1151.8M1494.15,1130.2V1151.8M1499.32,1130.2V1151.8M1504.49,1130.2V1151.8M1509.66,1130.2V1151.8M1514.83,1130.2V1151.8M1519.99,1130.2V1151.8M1525.16,1130.2V1151.8M1530.33,1130.2V1151.8M1535.50,1130.2V1151.8M1540.67,1130.2V1151.8M1545.84,1130.2V1151.8M1551.01,1130.2V1151.8M1556.18,1130.2V1151.8M1561.35,1130.2V1151.8M1566.52,1130.2V1151.8M1571.69,1130.2V1151.8M1576.86,1130.2V1151.8M1582.03,1130.2V1151.8M1587.20,1130.2V1151.8M1592.37,1130.2V1151.8M1597.54,1130.2V1151.8M1602.71,1130.2V1151.8M1607.88,1130.2V1151.8M1613.05,1130.2V1151.8M1618.22,1130.2V1151.8M1623.39,1130.2V1151.8M1628.56,1130.2V1151.8M1633.73,1130.2V1151.8M1638.90,1130.2V1151.8M1644.07,1130.2V1151.8M1649.24,1130.2V1151.8M1654.41,1130.2V1151.8M1659.58,1130.2V1151.8M1664.75,1130.2V1151.8M1669.92,1130.2V1151.8M1675.09,1130.2V1151.8M1680.26,1130.2V1151.8M1685.43,1130.2V1151.8M1690.59,1130.2V1151.8M1695.76,1130.2V1151.8M1700.93,1130.2V1151.8M1706.10,1130.2V1151.8M1711.27,1130.2V1151.8M1716.44,1130.2V1151.8M1721.61,1130.2V1151.8M1726.78,1130.2V1151.8M1731.95,1130.2V1151.8M1737.12,1130.2V1151.8M1742.29,1130.2V1151.8M1747.46,1130.2V1151.8M1752.63,1130.2V1151.8M1757.80,1130.2V1151.8M1762.97,1130.2V1151.8M1768.14,1130.2V1151.8M1773.31,1130.2V1151.8M1778.48,1130.2V1151.8M1783.65,1130.2V1151.8M1788.82,1003.5V1151.8M1793.99,1003.5V1151.8M1799.16,1003.5V1151.8M1804.33,1003.5V1151.8M1809.50,1003.5V1151.8M1814.67,1003.5V1151.8M1819.84,1003.5V1151.8M1825.01,1003.5V1151.8M1830.18,1003.5V1151.8M1835.35,1003.5V1151.8M1840.52,1003.5V1151.8M1845.69,1003.5V1151.8M1850.86,1003.5V1151.8M1856.03,1003.5V1151.8M1861.19,1003.5V1151.8M1866.36,1003.5V1151.8M1871.53,1003.5V1151.8M1876.70,1003.5V1151.8M1881.87,1003.5V1151.8M1887.04,1003.5V1151.8M1892.21,1003.5V1151.8M1897.38,1003.5V1151.8M1902.55,1003.5V1151.8M1907.72,1003.5V1151.8M1912.89,1003.5V1151.8M1918.06,1003.5V1151.8M1923.23,1003.5V1151.8M1928.40,1003.5V1151.8M1933.57,1003.5V1151.8M1938.74,1003.5V1151.8M1943.91,1003.5V1151.8M1949.08,1003.5V1151.8M1954.25,1003.5V1151.8M1959.42,1003.5V1151.8M1964.59,1003.5V1151.8M1969.76,1003.5V1151.8M1974.93,1003.5V1151.8M1980.10,1003.5V1151.8M1985.27,1003.5V1151.8M1990.44,1003.5V1151.8M1995.61,1003.5V1151.8M2000.78,1003.5V1151.8M2005.95,1003.5V1151.8M2011.12,1003.5V1151.8M2016.29,1003.5V1151.8M2021.46,1003.5V1151.8M2026.63,1003.5V1151.8M2031.80,1003.5V1151.8M2036.96,1003.5V1151.8M2042.13,1003.5V1151.8M2047.30,1003.5V1151.8M2052.47,1003.5V1151.8M2057.64,1003.5V1151.8M2062.81,1003.5V1151.8M2067.98,1003.5V1151.8M2073.15,1003.5V1151.8M2078.32,1003.5V1151.8M2083.49,1003.5V1151.8M2088.66,1003.5V1151.8M2093.83,1003.5V1151.8M2099.00,1003.5V1151.8M2104.17,1003.5V1151.8" fill="none" stroke="#c3ccd8" stroke-width="1.3"/>
<path d="M219.1,1130.2H1788.82M1788.82,1003.5H2104.17" fill="none" stroke="#c3ccd8" stroke-width="1.3"/>
<line x1="218" y1="1152" x2="2107" y2="1152" stroke="#c9d2de" stroke-width="2"/>
<line x1="218.2" y1="1151" x2="218.2" y2="1168.5" stroke="#c9d2de" stroke-width="2"/>
<line x1="337" y1="1151" x2="337" y2="1168.5" stroke="#c9d2de" stroke-width="2"/>
<line x1="491.8" y1="1151" x2="491.8" y2="1168.5" stroke="#c9d2de" stroke-width="2"/>
<line x1="652.1" y1="1151" x2="652.1" y2="1168.5" stroke="#c9d2de" stroke-width="2"/>
<line x1="812.4" y1="1151" x2="812.4" y2="1168.5" stroke="#c9d2de" stroke-width="2"/>
<line x1="958.3" y1="1151" x2="958.3" y2="1168.5" stroke="#c9d2de" stroke-width="2"/>
<line x1="1118.6" y1="1151" x2="1118.6" y2="1168.5" stroke="#c9d2de" stroke-width="2"/>
<line x1="1273.2" y1="1151" x2="1273.2" y2="1168.5" stroke="#c9d2de" stroke-width="2"/>
<line x1="1433.5" y1="1151" x2="1433.5" y2="1168.5" stroke="#c9d2de" stroke-width="2"/>
<line x1="1588.3" y1="1151" x2="1588.3" y2="1168.5" stroke="#c9d2de" stroke-width="2"/>
<line x1="1748.5" y1="1151" x2="1748.5" y2="1168.5" stroke="#c9d2de" stroke-width="2"/>
<line x1="1908.6" y1="1151" x2="1908.6" y2="1168.5" stroke="#c9d2de" stroke-width="2"/>
<line x1="2063.4" y1="1151" x2="2063.4" y2="1168.5" stroke="#c9d2de" stroke-width="2"/>
<line x1="2106.3" y1="1151" x2="2106.3" y2="1168.5" stroke="#c9d2de" stroke-width="2"/>
<path d="M219,1002.4 L1745.5,1002.4 L1748.5,727.1 L1853.7,727.1 L1857,728.8 L1889.2,728.8 L1893.5,726.8 L1898.6,732.5 L1914.7,732.5 L1919.7,730.2 L1928.2,730.8 L1935,730.2 L1940.9,731.8 L1946,729.6 L2065.4,729.6 L2070.5,733 L2075.6,732.5 L2080.7,729.6 L2092.5,733 L2106,733.4" fill="none" stroke="#72d1bf" stroke-width="3.2" stroke-linejoin="round"/>
</svg>
<div class="a" style="left:145.5px;top:590.4px;font-size:22.29px;transform:scaleX(1.0232);transform-origin:0 0;font-weight:normal;color:#e8ebf2;">AUM</div>
<div class="a" style="left:2129.2px;top:590.3px;font-size:21.85px;transform:scaleX(1.0279);transform-origin:0 0;font-weight:normal;color:#e8ebf2;">PNL</div>
<div class="a" style="left:114.0px;top:642.2px;font-size:22.72px;transform:scaleX(1.0499);transform-origin:0 0;font-weight:normal;color:#7a8290;">$6.34M</div>
<div class="a" style="left:118.0px;top:763.1px;font-size:22.29px;transform:scaleX(1.0151);transform-origin:0 0;font-weight:normal;color:#7a8290;">$4.73M</div>
<div class="a" style="left:121.0px;top:881.2px;font-size:22.14px;transform:scaleX(0.9814);transform-origin:0 0;font-weight:normal;color:#7a8290;">$3.13M</div>
<div class="a" style="left:117.7px;top:1002.0px;font-size:22.0px;transform:scaleX(1.0187);transform-origin:0 0;font-weight:normal;color:#e8ebf2;">$1.52M</div>
<div class="a" style="left:96.3px;top:1122.4px;font-size:20.54px;transform:scaleX(1.0866);transform-origin:0 0;font-weight:normal;color:#e8ebf2;">–$89.66K</div>
<div class="a" style="left:2132.9px;top:641.5px;font-size:23.12px;transform:scaleX(0.9289);transform-origin:0 0;font-weight:normal;color:#e8ebf2;">+0.13%</div>
<div class="a" style="left:2131.8px;top:762.5px;font-size:23.4px;transform:scaleX(1.0522);transform-origin:0 0;font-weight:normal;color:#e8ebf2;">+0.08%</div>
<div class="a" style="left:2131.8px;top:880.6px;font-size:22.68px;transform:scaleX(1.0683);transform-origin:0 0;font-weight:normal;color:#e8ebf2;">+0.04%</div>
<div class="a" style="left:2133.0px;top:1001.6px;font-size:22.97px;transform:scaleX(0.9691);transform-origin:0 0;font-weight:normal;color:#e8ebf2;">–0.01%</div>
<div class="a" style="left:2133.0px;top:1121.0px;font-size:23.26px;transform:scaleX(1.0211);transform-origin:0 0;font-weight:normal;color:#e8ebf2;">–0.06%</div>
<div class="a" style="left:338.0px;top:1173.5px;font-size:21.56px;transform:scaleX(1.0732);transform-origin:0 0;font-weight:normal;color:#e8ebf2;">Nov</div>
<div class="a" style="left:492.7px;top:1173.5px;font-size:21.56px;transform:scaleX(1.1499);transform-origin:0 0;font-weight:normal;color:#e8ebf2;">Dec</div>
<div class="a" style="left:654.6px;top:1173.5px;font-size:21.56px;transform:scaleX(1.0005);transform-origin:0 0;font-weight:normal;color:#e8ebf2;">Jan</div>
<div class="a" style="left:813.1px;top:1173.5px;font-size:21.56px;transform:scaleX(1.1016);transform-origin:0 0;font-weight:normal;color:#e8ebf2;">Feb</div>
<div class="a" style="left:957.7px;top:1173.5px;font-size:21.56px;transform:scaleX(1.1212);transform-origin:0 0;font-weight:normal;color:#e8ebf2;">Mar</div>
<div class="a" style="left:1119.4px;top:1173.5px;font-size:21.56px;transform:scaleX(1.1144);transform-origin:0 0;font-weight:normal;color:#e8ebf2;">Apr</div>
<div class="a" style="left:1272.6px;top:1173.5px;font-size:21.56px;transform:scaleX(1.102);transform-origin:0 0;font-weight:normal;color:#e8ebf2;">May</div>
<div class="a" style="left:1434.0px;top:1173.5px;font-size:21.56px;transform:scaleX(1.0672);transform-origin:0 0;font-weight:normal;color:#e8ebf2;">Jun</div>
<div class="a" style="left:1589.1px;top:1173.5px;font-size:21.56px;transform:scaleX(1.0446);transform-origin:0 0;font-weight:normal;color:#e8ebf2;">Jul</div>
<div class="a" style="left:1750.0px;top:1173.5px;font-size:21.56px;transform:scaleX(1.1013);transform-origin:0 0;font-weight:normal;color:#e8ebf2;">Aug</div>
<div class="a" style="left:1908.8px;top:1173.7px;font-size:21.25px;transform:scaleX(1.1417);transform-origin:0 0;font-weight:normal;color:#e8ebf2;">Sep</div>
<div class="a" style="left:2064.3px;top:1173.7px;font-size:21.25px;transform:scaleX(1.1985);transform-origin:0 0;font-weight:normal;color:#e8ebf2;">Oct</div>
<div class="a" style="left:653.8px;top:1231.2px;font-size:22.54px;transform:scaleX(1.1049);transform-origin:0 0;font-weight:normal;color:#e8ebf2;">2022</div>
</body></html>
